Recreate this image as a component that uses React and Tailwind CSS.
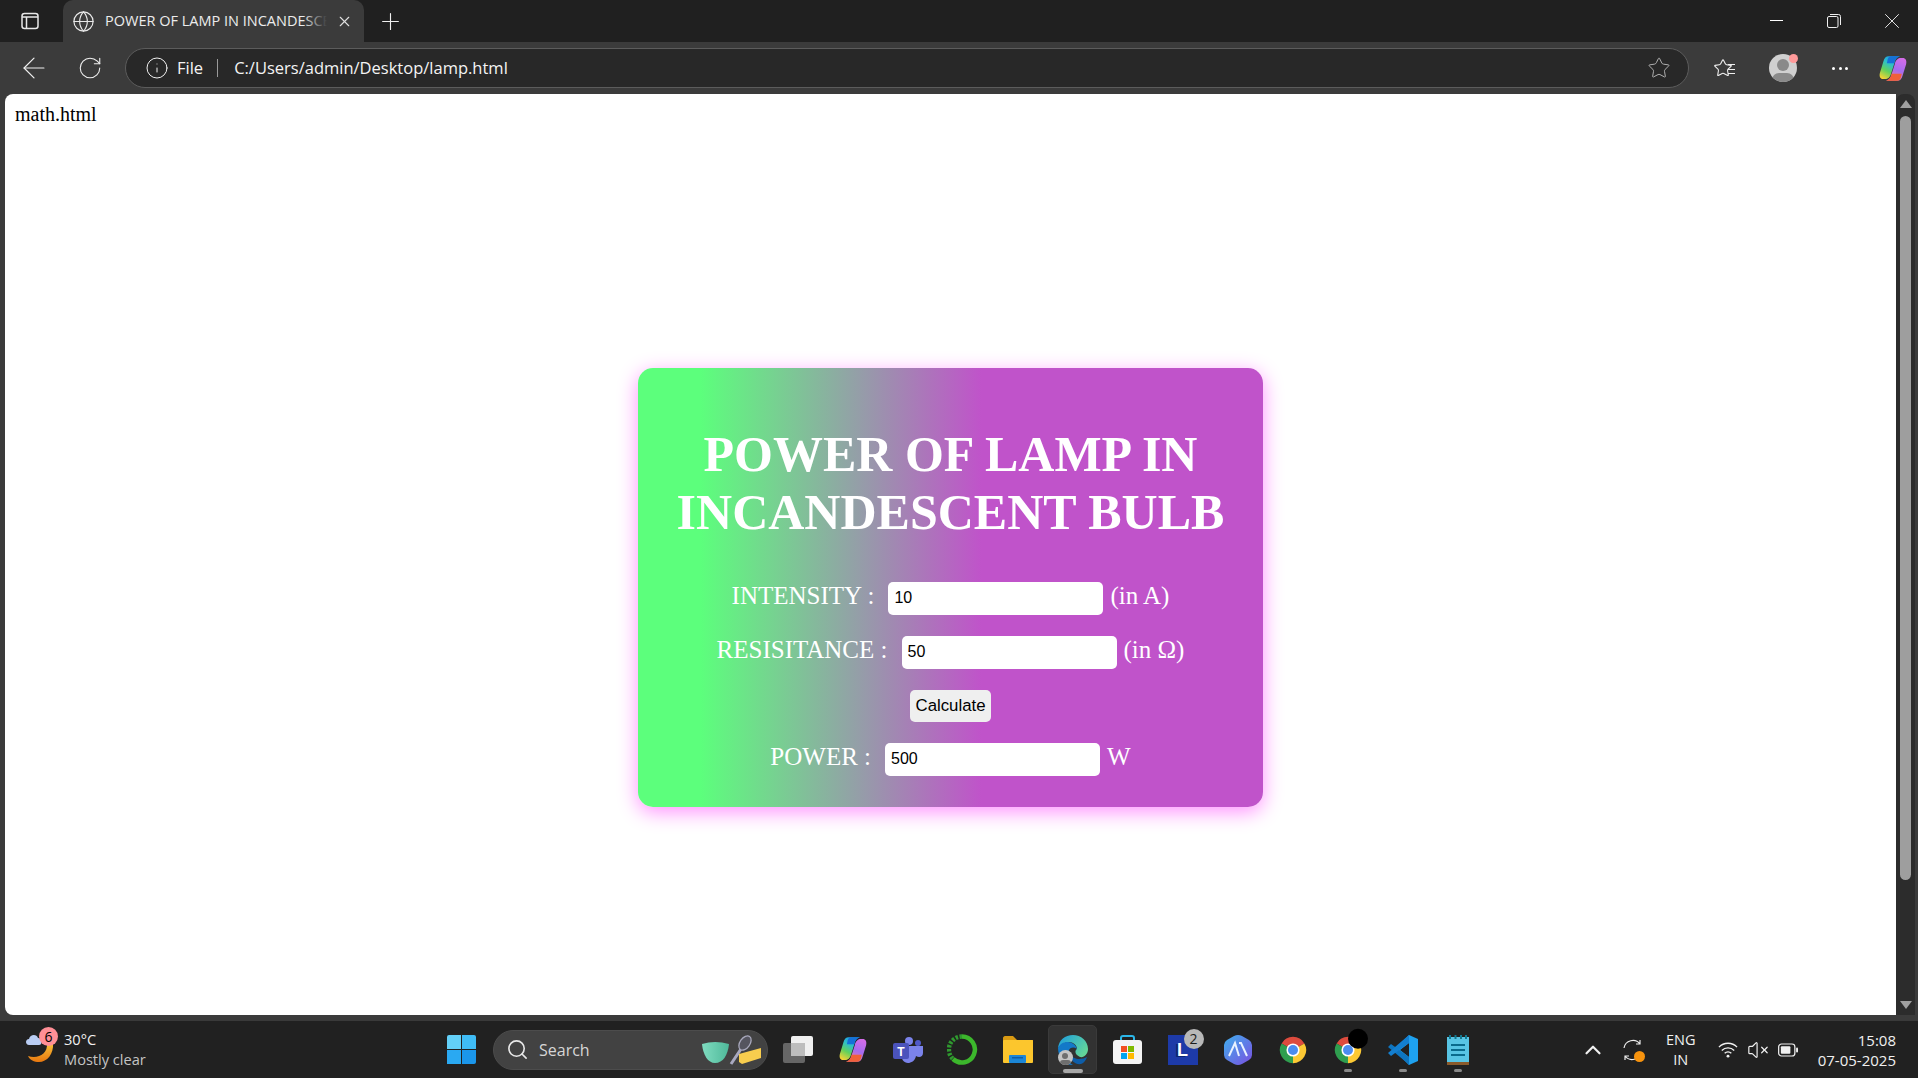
import React from "react";
import { Globe, X, Plus, ArrowLeft, RotateCw, Info, Star, Search, ChevronUp, VolumeX } from "lucide-react";

const sans = "font-['Segoe_UI','Open_Sans','Noto_Sans',sans-serif]";

function Chrome({ dark }) {
  return (
    <svg width="30" height="30" viewBox="0 0 48 48" className="overflow-visible">
      <path d="M24 24 L5.800 13.500 A21 21 0 0 1 42.200 13.500 Z" fill="#dd4b3e" />
      <path d="M24 24 L42.200 13.500 A21 21 0 0 1 24 45 Z" fill="#fcc934" />
      <path d="M24 24 L24 45 A21 21 0 0 1 5.800 13.500 Z" fill="#2f9e4f" />
      <circle cx="24" cy="24" r="10.500" fill="#fff" />
      <circle cx="24" cy="24" r="8" fill="#4b8cf0" />
      {dark && <circle cx="40" cy="6" r="16" fill="#000" />}
    </svg>
  );
}

function Copilot({ id, w = 28, h = 27 }) {
  return (
    <svg width={w} height={h} viewBox="0 0 32 30">
      <defs>
        <linearGradient id={id + "a"} x1="0.7" y1="0" x2="0.2" y2="1">
          <stop offset="0" stopColor="#1796e8" />
          <stop offset="0.35" stopColor="#2fc0c8" />
          <stop offset="0.65" stopColor="#62d15c" />
          <stop offset="1" stopColor="#f4d335" />
        </linearGradient>
        <linearGradient id={id + "b"} x1="0.7" y1="0" x2="0.3" y2="1">
          <stop offset="0" stopColor="#d46ce8" />
          <stop offset="0.5" stopColor="#a56cf0" />
          <stop offset="1" stopColor="#f27e9c" />
        </linearGradient>
      </defs>
      <path d="M11 1 H24 C20 2 18.500 5 17.500 9 L14 20 C13 25 10 27 7 27 H5 C1.500 27 0 24 1 20 L5 7 C6 3 8 1 11 1 Z" fill={`url(#${id}a)`} />
      <path d="M21 29 H8 C12 28 13.500 25 14.500 21 L18 10 C19 5 22 3 25 3 H27 C30.500 3 32 6 31 10 L27 23 C26 27 24 29 21 29 Z" fill={`url(#${id}b)`} />
      <path d="M8 29 C12 28 13.500 25 14.500 21 L26 21 L25 25 C24 28 23 29 20 29 Z" fill="#f0603a" />
      <path d="M24 1 C20 2 18.500 5 17.500 9 L9 9 L10 4 C11 2 12 1 14 1 Z" fill="#1570d8" />
    </svg>
  );
}

function TaskIcons() {
  const icons = [
    <svg width="30" height="28" viewBox="0 0 30 28">
      <rect x="0" y="7" width="22" height="20" rx="2" fill="#666" />
      <rect x="8" y="0" width="22" height="20" rx="2" fill="#f0f0f0" />
      <rect x="8" y="7" width="14" height="13" fill="#bdbdbd" />
    </svg>,
    <Copilot id="ctask" />,
    <svg width="30" height="26" viewBox="0 0 30 26">
      <circle cx="16" cy="4" r="4" fill="#7b83eb" />
      <circle cx="25" cy="6" r="3" fill="#5059c9" />
      <path d="M9 9 H30 V16 C30 20 26 21 23 19 C22 24 18 26 15 26 C11 26 8 22 8 17 Z" fill="#7b83eb" />
      <rect x="0" y="6" width="16" height="16" rx="2" fill="#4b53bc" />
      <text x="8" y="19" fontSize="12" fontWeight="bold" fontFamily="'Liberation Sans',sans-serif" textAnchor="middle" fill="#fff">T</text>
    </svg>,
    <svg width="31" height="31" viewBox="0 0 31 31" fill="none">
      <path d="M15 2.500 A13 13 0 1 1 6 25" stroke="#3cb72c" strokeWidth="4.500" />
      <path d="M15 2.500 A13 13 0 0 0 6 25" stroke="#2f9a2f" strokeWidth="4.500" strokeDasharray="2.500 1.500" />
    </svg>,
    <svg width="30" height="27" viewBox="0 0 30 27">
      <path d="M0 2 C0 1 1 0 2 0 H10 L14 4 H30 V12 H0 Z" fill="#d99a12" />
      <rect x="0" y="4" width="30" height="23" rx="1" fill="#fcc62d" />
      <rect x="6" y="19" width="17" height="8" rx="1" fill="#1b86d6" />
      <rect x="9" y="21" width="11" height="1.500" fill="#0f5da5" />
    </svg>,
    <div className="relative w-[30px] h-[30px]">
      <svg width="30" height="30" viewBox="0 0 30 30">
        <defs>
          <linearGradient id="edg" x1="0" y1="0" x2="1" y2="0.6">
            <stop offset="0" stopColor="#1a9ce0" />
            <stop offset="1" stopColor="#62d59a" />
          </linearGradient>
        </defs>
        <path d="M22 22 C26 23 30 19 30 14 C30 6 23 0 15 0 C7 0 1 5 0 13 C3 9 7 7 11 7 C15 7 19 10 19 14 C17 15 16 19 22 22 Z" fill="url(#edg)" />
        <path d="M0 13 C0 22 6 30 15 30 C9 27 8 20 11 15 C13 12 16 12 19 14 C18 10 14 7 10 7 C5 7 2 9 0 13 Z" fill="#1379c8" />
        <path d="M12 19 C12 26 18 30 23 29 C26 28 28 25 29 22 C24 25 15 25 12 19 Z" fill="#0d5da8" />
      </svg>
      <div className="absolute left-[0px] bottom-0 w-[15px] h-[15px] rounded-full bg-[#c4c4c4] overflow-hidden">
        <div className="mx-auto mt-[3px] w-[6px] h-[6px] rounded-full bg-[#6e6e6e]" />
        <div className="mx-auto mt-[1px] w-[11px] h-[6px] rounded-full bg-[#6e6e6e]" />
      </div>
    </div>,
    <svg width="29" height="29" viewBox="0 0 29 29">
      <path d="M8 7 V3 Q8 1 10 1 H19 Q21 1 21 3 V7" fill="none" stroke="#2bb6e8" strokeWidth="2" />
      <rect x="0" y="5" width="29" height="24" rx="3" fill="#f4f4f4" />
      <rect x="8" y="11" width="6" height="6" fill="#f25022" />
      <rect x="15" y="11" width="6" height="6" fill="#7fba00" />
      <rect x="8" y="18" width="6" height="6" fill="#00a4ef" />
      <rect x="15" y="18" width="6" height="6" fill="#ffb900" />
    </svg>,
    <div className="relative w-[30px] h-[30px] bg-[#1d3aa8] flex items-center justify-center">
      <span className="font-['Liberation_Sans',sans-serif] font-bold text-white text-[18px] leading-none [text-shadow:-2px_1px_0_#0c2470]">L</span>
      <div className="absolute right-[-6px] top-[-6px] w-[20px] h-[20px] rounded-full bg-[#b8b8b8] text-[#1c1c1c] text-[14px] leading-[20px] text-center">2</div>
    </div>,
    <svg width="32" height="30" viewBox="0 0 32 30">
      <defs>
        <linearGradient id="arw" x1="0" y1="0" x2="1" y2="1">
          <stop offset="0" stopColor="#3fb0ee" />
          <stop offset="1" stopColor="#7a4fe0" />
        </linearGradient>
      </defs>
      <path d="M12 1 Q16 -1 20 1 L27 5 Q30 7 30 10 L30 20 Q30 23 27 25 L20 29 Q16 31 12 29 L5 25 Q2 23 2 20 L2 10 Q2 7 5 5 Z" fill="url(#arw)" />
      <path d="M7 21 L13 8 L17 21 M17 8 L19 8 L25 21" fill="none" stroke="#e8f2ff" strokeWidth="2" />
    </svg>,
    <Chrome />,
    <Chrome dark />,
    <svg width="30" height="30" viewBox="0 0 30 30">
      <path d="M21 0 L30 4 V26 L21 30 L8 17 V13 Z" fill="#1ea1ef" />
      <path d="M21 8 L21 22 L12 15 Z" fill="#212121" />
      <path d="M3 9 L0 12 L18 27 L21 30 L21 22 Z" fill="#0e75c0" />
      <path d="M3 21 L0 18 L21 0 L21 8 Z" fill="#137fd0" />
    </svg>,
    <svg width="22" height="30" viewBox="0 0 22 30">
      <rect x="0" y="2" width="22" height="25" fill="#58c4e4" />
      <rect x="0" y="27" width="22" height="3" fill="#8a5a2b" />
      <path d="M4 10 H18 M4 15 H18 M4 20 H18" stroke="#0a6a8c" strokeWidth="2" />
      <path d="M3 0 V4 M8.500 0 V4 M14 0 V4 M19 0 V4" stroke="#12788f" strokeWidth="2" />
    </svg>,
  ];
  return (
    <div className="ml-[2px] h-[57px] flex items-center">
      {icons.map((ic, i) => (
        <div key={i} className="relative w-[55px] h-[49px] flex items-center justify-center">
          {i === 5 && <div className="absolute inset-x-[3px] inset-y-0 rounded-[5px] bg-[#323232] border border-[#3a3a3a]" />}
          <div className="relative">{ic}</div>
          {i === 5 && <div className="absolute bottom-[1px] left-[18px] w-[20px] h-[4px] rounded-full bg-[#a8a8a8]" />}
          {i >= 10 && <div className="absolute bottom-[2px] left-[24px] w-[8px] h-[3.500px] rounded-full bg-[#8a8a8a]" />}
        </div>
      ))}
    </div>
  );
}

function Taskbar() {
  return (
    <div className={`h-[58px] shrink-0 bg-[#212121] border-t border-[#3a3a3a] flex items-center text-white ${sans}`}>
      <div className="w-[447px] shrink-0 flex items-center pl-[25px]">
        <div className="relative w-[39px] h-[36px] shrink-0">
          <svg width="30" height="34" viewBox="0 0 30 34" className="absolute left-0 top-0">
            <defs>
              <linearGradient id="moon" x1="0" y1="0" x2="0" y2="1">
                <stop offset="0" stopColor="#f8c33a" />
                <stop offset="1" stopColor="#e8770f" />
              </linearGradient>
            </defs>
            <path d="M28 11 C29 22 22 30 14 30 C9 30 5 28 3 24 C12 27 23 23 22 11 Z" fill="url(#moon)" />
            <path d="M4 13 C0 13 0 7 4 7 C5 2 12 2 13 6 C17 6 18 13 14 13 Z" fill="#b9cdf3" />
          </svg>
          <div className="absolute left-[14px] top-[-5px] w-[19px] h-[19px] rounded-full bg-[#ff8f96] text-black text-[14px] leading-[19px] text-center">6</div>
        </div>
        <div className="-mt-[1px]">
          <div className="text-[14.600px] leading-[20px] text-[#f2f2f2]">30°C</div>
          <div className="text-[14.600px] leading-[20px] text-[#c4c4c4]">Mostly clear</div>
        </div>
      </div>
      <div className="w-[29px] h-[29px] shrink-0 grid grid-cols-2 gap-[1px]">
        <div className="bg-[#63d0f8] rounded-tl-[2px]" />
        <div className="bg-[#3fbcf6] rounded-tr-[2px]" />
        <div className="bg-[#2aa9f2]" />
        <div className="bg-[#1b96ea] rounded-br-[2px]" />
      </div>
      <div className="relative ml-[17px] w-[275px] h-[40px] shrink-0 rounded-full bg-[#424242] border border-[#4c4c4c] flex items-center pl-[12px]">
        <Search size={23} strokeWidth={1.7} className="text-[#e8e8e8]" />
        <span className="ml-[10px] text-[16px] text-[#d6d6d6]">Search</span>
        <svg width="62" height="40" viewBox="0 0 62 40" className="absolute left-[207px] top-0">
          <defs>
            <linearGradient id="bowl" x1="0" y1="0" x2="1" y2="0">
              <stop offset="0" stopColor="#7fdcc0" />
              <stop offset="1" stopColor="#4fb99a" />
            </linearGradient>
          </defs>
          <path d="M1 13 Q14 9 28 13 C27 24 22 32 14 32 C7 32 2 24 1 13 Z" fill="url(#bowl)" />
          <path d="M30 33 L40 18" stroke="#a9a9c0" strokeWidth="3" />
          <ellipse cx="44" cy="12" rx="5" ry="8" fill="#55555f" stroke="#a8a8bc" strokeWidth="1.300" transform="rotate(35 44 12)" />
          <path d="M38 23 L60 17 V27 L41 33 L38 31 Z" fill="#f8cd4e" />
        </svg>
      </div>
      <TaskIcons />
      <div className="ml-auto h-[57px] flex items-center text-[#f0f0f0]">
        <ChevronUp size={26} strokeWidth={2} />
        <div className="relative w-[22px] h-[22px] ml-[16px]">
          <svg width="22" height="22" viewBox="0 0 22 22" fill="none" stroke="#eee" strokeWidth="1.200">
            <path d="M2 9 A9 9 0 0 1 18 5 M18 1 V5 H14" />
            <path d="M19 13 A9 9 0 0 1 3 17 M3 21 V17 H7" />
          </svg>
          <div className="absolute right-[-1px] bottom-[-1px] w-[11px] h-[11px] rounded-full bg-[#f7930e]" />
        </div>
        <div className="w-[40px] ml-[17px] text-center text-[14.500px] leading-[20px]">ENG<br />IN</div>
        <svg width="20" height="18" viewBox="0 0 21 18" fill="none" stroke="#f0f0f0" strokeWidth="1.400" className="ml-[17px]">
          <path d="M1 6 A13 13 0 0 1 20 6 M4 9.500 A9 9 0 0 1 17 9.500 M7 12.500 A5 5 0 0 1 14 12.500" />
          <circle cx="10.500" cy="15.500" r="1.500" fill="#f0f0f0" stroke="none" />
        </svg>
        <VolumeX size={22} strokeWidth={1.3} className="ml-[9px]" />
        <svg width="20" height="14" viewBox="0 0 21 14" fill="none" className="ml-[9px]">
          <rect x="0.700" y="0.700" width="17" height="12.600" rx="3" stroke="#f0f0f0" strokeWidth="1.300" />
          <rect x="3" y="3" width="10" height="8" rx="1" fill="#f0f0f0" />
          <rect x="19" y="4.500" width="2" height="5" rx="1" fill="#f0f0f0" />
        </svg>
        <div className="ml-[20px] mr-[22px] text-right text-[15px] leading-[20px]">15:08<br />07-05-2025</div>
      </div>
    </div>
  );
}

function Tabs() {
  return (
    <div className={`h-[42px] shrink-0 bg-[#202020] flex items-end text-white ${sans}`}>
      <div className="w-[63px] h-[42px] flex items-center justify-center">
        <svg width="18" height="18" viewBox="0 0 18 18" fill="none" stroke="#e8e8e8" strokeWidth="1.500" className="-ml-[3px]">
          <rect x="1" y="1.500" width="16" height="15" rx="2.500" />
          <path d="M1 5 H17 M5.500 5 V16.500" />
        </svg>
      </div>
      <div className="w-[301px] h-[42px] shrink-0 rounded-t-[10px] bg-[#3b3b3b] flex items-center pl-[9px] mr-[13px]">
        <Globe size={23} strokeWidth={1.2} className="text-[#e8e8e8] shrink-0" />
        <div className="relative ml-[10px] w-[222px] overflow-hidden whitespace-nowrap text-[14.500px] text-[#ececec]">
          POWER OF LAMP IN INCANDESCENT BULB
          <div className="absolute right-0 top-0 bottom-0 w-[24px] bg-gradient-to-r from-transparent to-[#3b3b3b]" />
        </div>
        <X size={17} strokeWidth={1.6} className="ml-[9px] text-[#e0e0e0] shrink-0" />
      </div>
      <div className="h-[42px] flex items-center">
        <Plus size={27} strokeWidth={1} className="text-[#f0f0f0]" />
      </div>
      <div className="ml-auto -mr-[3px] h-[42px] flex items-center">
        <div className="w-[58px] flex justify-center -mt-[2px]"><div className="w-[13px] h-[1px] bg-white" /></div>
        <div className="w-[58px] flex justify-center">
          <svg width="14" height="14" viewBox="0 0 14 14" fill="none" stroke="#f0f0f0" strokeWidth="1">
            <rect x="0.500" y="2.500" width="10.500" height="11" rx="1.500" />
            <path d="M3 .5 H11.500 A2 2 0 0 1 13.500 2.500 V11" />
          </svg>
        </div>
        <div className="w-[58px] flex justify-center"><X size={26} strokeWidth={0.8} className="text-white" /></div>
      </div>
    </div>
  );
}

function Toolbar() {
  return (
    <div className={`h-[52px] shrink-0 bg-[#3b3b3b] flex items-center text-white ${sans}`}>
      <ArrowLeft size={34} strokeWidth={0.85} className="ml-[17px] text-[#f0f0f0] shrink-0" />
      <RotateCw size={26} strokeWidth={1} className="ml-[26px] text-[#f0f0f0] shrink-0" />
      <div className="ml-[22px] w-[1564px] h-[40px] shrink-0 rounded-full bg-[#282828] border border-[#5c5c5c] flex items-center pl-[19px]">
        <Info size={24} strokeWidth={1} className="text-[#f0f0f0]" />
        <span className="ml-[8px] text-[16.500px] text-[#f4f4f4]">File</span>
        <div className="ml-[14px] w-[1px] h-[18px] bg-[#9a9a9a]" />
        <span className="ml-[16px] text-[16.500px] text-[#f4f4f4]">C:/Users/admin/Desktop/lamp.html</span>
        <Star size={24} strokeWidth={1} className="ml-auto mr-[17px] text-[#b0b0b0]" />
      </div>
      <div className="relative ml-[26px] w-[20px] h-[20px] shrink-0">
        <Star size={20} strokeWidth={1.3} className="absolute left-[-2px] top-0 text-[#f0f0f0]" />
        <div className="absolute right-0 top-[6px] w-[7px] h-[10px] border-y border-[#f0f0f0] flex items-center">
          <div className="w-full h-[1px] bg-[#f0f0f0]" />
        </div>
      </div>
      <div className="relative ml-[34px] w-[28px] h-[28px] shrink-0">
        <div className="absolute inset-0 rounded-full bg-[#d0d0d0] overflow-hidden">
          <div className="absolute left-[8px] top-[5px] w-[12px] h-[12px] rounded-full bg-[#8a8a8a]" />
          <div className="absolute left-[3px] top-[19px] w-[22px] h-[14px] rounded-full bg-[#8a8a8a]" />
        </div>
        <div className="absolute right-[-1px] top-0 w-[9px] h-[9px] rounded-full bg-[#ff9a9a]" />
      </div>
      <div className="ml-[35px] flex gap-[3.500px]">
        <div className="w-[3px] h-[3px] rounded-full bg-white" />
        <div className="w-[3px] h-[3px] rounded-full bg-white" />
        <div className="w-[3px] h-[3px] rounded-full bg-white" />
      </div>
      <div className="ml-[31px]"><Copilot id="ctool" /></div>
    </div>
  );
}

function Field({ label, value, unit }) {
  return (
    <div className="h-[33px] mb-[21px] leading-[28px] text-center whitespace-nowrap">
      {label}
      <input
        readOnly
        value={value}
        className="align-top w-[215px] h-[33px] ml-[14px] mr-[7px] pl-[6px] pr-[6px] pb-[2px] bg-white rounded-[5px] text-[16px] text-black outline-none font-['Liberation_Sans',sans-serif]"
      />
      {unit}
    </div>
  );
}

function Scrollbar() {
  return (
    <div className="w-[19px] mr-[3px] shrink-0 bg-[#2c2c2c] rounded-t-[8px] flex flex-col items-center">
      <div className="mt-[6px] w-0 h-0 border-x-[6px] border-x-transparent border-b-[8px] border-b-[#a0a0a0]" />
      <div className="mt-[8px] w-[11px] h-[764px] rounded-full bg-[#9e9e9e]" />
      <div className="mt-auto mb-[6px] w-0 h-0 border-x-[6px] border-x-transparent border-t-[8px] border-t-[#a0a0a0]" />
    </div>
  );
}

export default function App() {
  return (
    <div className="w-[1918px] h-[1078px] flex flex-col overflow-hidden bg-[#3b3b3b]">
      <Tabs />
      <Toolbar />
      <div className="flex-1 flex min-h-0 pb-[5px] pl-[5px]">
        <div className="flex-1 bg-white rounded-l-[8px] font-['Liberation_Serif',serif] text-black">
          <div className="pt-[9px] pl-[10px] text-[20px] leading-[23px]">math.html</div>
          <div className="mt-[242px] mx-auto w-[625px] h-[439px] rounded-[15px] bg-[linear-gradient(to_right,#5cff7c_10%,#c053ca_55%)] shadow-[0_5px_20px_#ff90ff] text-white text-[25px] pt-[58px]">
            <h1 className="text-[50px] leading-[57.500px] font-bold text-center mb-[41px]">POWER OF LAMP IN<br />INCANDESCENT BULB</h1>
            <Field label="INTENSITY :" value="10" unit="(in A)" />
            <Field label="RESISITANCE :" value="50" unit="(in Ω)" />
            <div className="h-[32px] mb-[21px] flex justify-center">
              <button className="w-[81px] h-[32px] bg-[#efefef] rounded-[5px] text-black text-[16.800px] font-['Liberation_Sans',sans-serif]">Calculate</button>
            </div>
            <Field label="POWER :" value="500" unit="W" />
          </div>
        </div>
        <Scrollbar />
      </div>
      <Taskbar />
    </div>
  );
}
